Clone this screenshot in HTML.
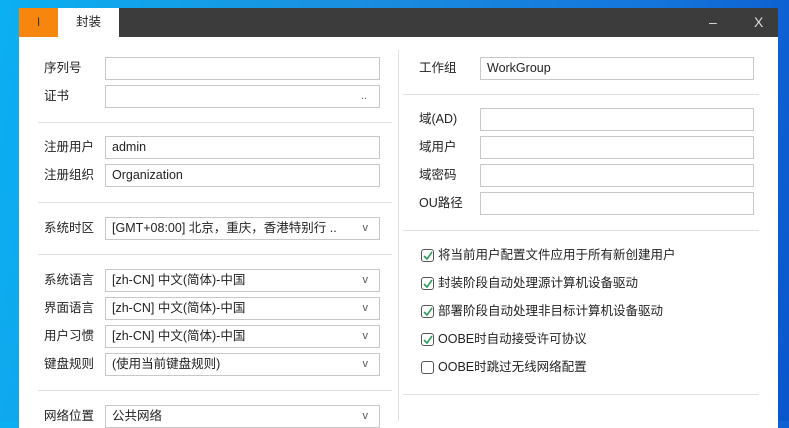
<!DOCTYPE html>
<html><head><meta charset="utf-8"><style>
*{margin:0;padding:0;box-sizing:border-box}
body{width:789px;height:421px;overflow:hidden;position:relative;font-family:"Liberation Sans","Microsoft YaHei","Noto Sans CJK SC",sans-serif;font-size:12.5px;color:#222;background:linear-gradient(100deg,#0bb0f2 0%,#1a8fe0 40%,#1476dc 75%,#0a56cc 100%)}
.win{position:absolute;left:19px;top:8px;width:759px;height:420px;background:#fff}
.tb{position:absolute;left:0;top:0;width:759px;height:29px;background:#3c3c3c}
.t1{position:absolute;left:0;top:0;width:39px;height:29px;background:#f7860f;color:#333;text-align:center;line-height:29px;font-size:12px}
.t2{position:absolute;left:39px;top:0;width:61px;height:29px;background:#fff;text-align:center;line-height:29px}
.ctl{position:absolute;top:0;color:#ddd;line-height:29px;font-size:14px}
.l{position:absolute;font-size:12.5px;line-height:23px}
.i{position:absolute;height:23px;border:1px solid #c8c8c8;background:#fff;line-height:21px;padding-left:6px;font-size:12.5px}
.i .v{position:absolute;right:11px;top:0;color:#555;font-size:11px}
.h{position:absolute;height:1px;background:#e0e0e0}
.cb{position:absolute;left:421px;width:13px;height:13px;border:1px solid #555;border-radius:3px}
.cb svg{position:absolute;left:1px;top:1px}
.ct{position:absolute;left:438px;line-height:16px}
</style></head><body>
<div class="win">
<div class="tb"><div class="t1">I</div><div class="t2">封装</div>
<div class="ctl" style="left:690px">–</div><div class="ctl" style="left:735px">X</div></div>
</div>
<div style="position:absolute;left:398px;top:50px;width:1px;height:371px;background:#e0e0e0"></div>
<div class="l" style="left:44px;top:57px">序列号</div><div class="i" style="left:105px;top:57px;width:275px"></div>
<div class="l" style="left:44px;top:85px">证书</div><div class="i" style="left:105px;top:85px;width:275px"><span class="v" style="right:12px">..</span></div>
<div class="h" style="left:38px;top:122px;width:354px"></div>
<div class="l" style="left:44px;top:136px">注册用户</div><div class="i" style="left:105px;top:136px;width:275px">admin</div>
<div class="l" style="left:44px;top:164px">注册组织</div><div class="i" style="left:105px;top:164px;width:275px">Organization</div>
<div class="h" style="left:38px;top:202px;width:354px"></div>
<div class="l" style="left:44px;top:217px">系统时区</div><div class="i" style="left:105px;top:217px;width:275px">[GMT+08:00] 北京，重庆，香港特别行 ..<span class="v">v</span></div>
<div class="h" style="left:38px;top:254px;width:354px"></div>
<div class="l" style="left:44px;top:269px">系统语言</div><div class="i" style="left:105px;top:269px;width:275px">[zh-CN] 中文(简体)-中国<span class="v">v</span></div>
<div class="l" style="left:44px;top:297px">界面语言</div><div class="i" style="left:105px;top:297px;width:275px">[zh-CN] 中文(简体)-中国<span class="v">v</span></div>
<div class="l" style="left:44px;top:325px">用户习惯</div><div class="i" style="left:105px;top:325px;width:275px">[zh-CN] 中文(简体)-中国<span class="v">v</span></div>
<div class="l" style="left:44px;top:353px">键盘规则</div><div class="i" style="left:105px;top:353px;width:275px">(使用当前键盘规则)<span class="v">v</span></div>
<div class="h" style="left:38px;top:390px;width:354px"></div>
<div class="l" style="left:44px;top:405px">网络位置</div><div class="i" style="left:105px;top:405px;width:275px">公共网络<span class="v">v</span></div>

<div class="l" style="left:419px;top:57px">工作组</div><div class="i" style="left:480px;top:57px;width:274px">WorkGroup</div>
<div class="h" style="left:403px;top:94px;width:356px"></div>
<div class="l" style="left:419px;top:108px">域(AD)</div><div class="i" style="left:480px;top:108px;width:274px"></div>
<div class="l" style="left:419px;top:136px">域用户</div><div class="i" style="left:480px;top:136px;width:274px"></div>
<div class="l" style="left:419px;top:164px">域密码</div><div class="i" style="left:480px;top:164px;width:274px"></div>
<div class="l" style="left:419px;top:192px">OU路径</div><div class="i" style="left:480px;top:192px;width:274px"></div>
<div class="h" style="left:403px;top:230px;width:356px"></div>
<div class="cb" style="top:249px"><svg width="10" height="10"><path d="M1 5 L4 8 L9 1" stroke="#2f9a5a" stroke-width="1.6" fill="none"/></svg></div><div class="ct" style="top:247px">将当前用户配置文件应用于所有新创建用户</div>
<div class="cb" style="top:277px"><svg width="10" height="10"><path d="M1 5 L4 8 L9 1" stroke="#2f9a5a" stroke-width="1.6" fill="none"/></svg></div><div class="ct" style="top:275px">封装阶段自动处理源计算机设备驱动</div>
<div class="cb" style="top:305px"><svg width="10" height="10"><path d="M1 5 L4 8 L9 1" stroke="#2f9a5a" stroke-width="1.6" fill="none"/></svg></div><div class="ct" style="top:303px">部署阶段自动处理非目标计算机设备驱动</div>
<div class="cb" style="top:333px"><svg width="10" height="10"><path d="M1 5 L4 8 L9 1" stroke="#2f9a5a" stroke-width="1.6" fill="none"/></svg></div><div class="ct" style="top:331px">OOBE时自动接受许可协议</div>
<div class="cb" style="top:361px"></div><div class="ct" style="top:359px">OOBE时跳过无线网络配置</div>
<div class="h" style="left:403px;top:394px;width:356px"></div>
</body></html>
